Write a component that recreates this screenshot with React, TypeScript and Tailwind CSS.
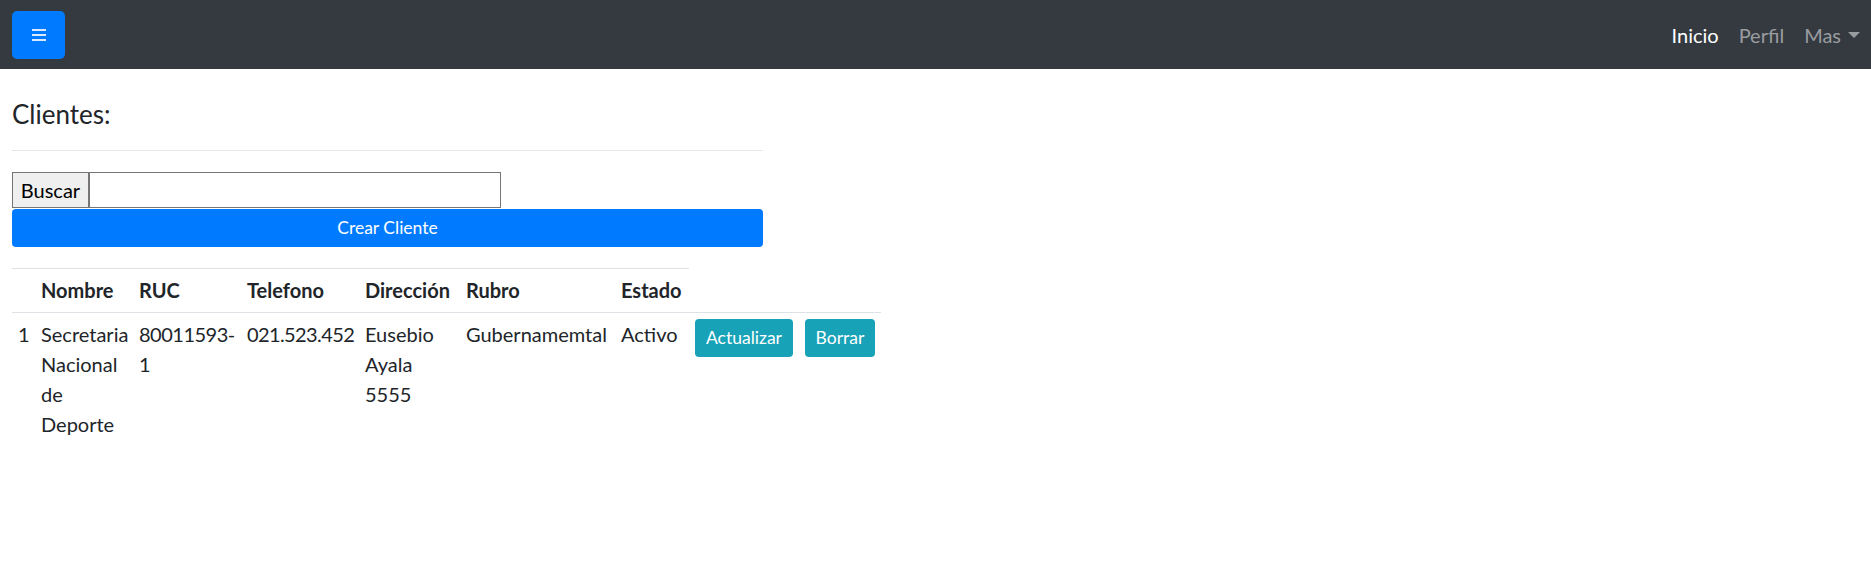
import React from "react";

export default function App() {
  const font = { fontFamily: "Lato, 'Noto Sans', 'Liberation Sans', sans-serif" };
  return (
    <div className="min-h-[585px] w-[1871px] bg-white text-[#212529]" style={font}>
      <nav className="flex h-[69px] items-center justify-between bg-[#343a40] pl-[12px] pr-[1px]">
        <button className="flex h-[48px] w-[53px] items-center justify-center rounded-[5px] bg-[#007bff]">
          <svg width="14" height="12" viewBox="0 0 14 12">
            <rect x="0" y="0" width="14" height="2" fill="#dbe9ff" />
            <rect x="0" y="5" width="14" height="2" fill="#dbe9ff" />
            <rect x="0" y="10" width="14" height="2" fill="#dbe9ff" />
          </svg>
        </button>
        <ul className="flex items-center text-[20px] leading-[30px]">
          <li className="px-[10px] text-white">Inicio</li>
          <li className="px-[10px] text-[#9a9da0]">Perfil</li>
          <li className="flex items-center px-[10px] text-[#9a9da0]">
            Mas
            <span className="ml-[7px] inline-block h-0 w-0 border-x-[6px] border-t-[6px] border-x-transparent border-t-[#9a9da0]" />
          </li>
        </ul>
      </nav>

      <main className="pl-[12px]">
        <h4 className="mt-[27px] text-[26px] leading-[36px] font-normal">Clientes:</h4>
        <hr className="mt-[18px] w-[751px] border-t border-[#e6e6e6]" />
        <div className="mt-[21px] flex h-[36px]">
          <button className="h-[36px] w-[77px] border border-[#767676] bg-[#efefef] text-[20px] text-black">
            Buscar
          </button>
          <input className="h-[36px] w-[412px] border border-[#767676] bg-white outline-none" type="text" />
        </div>
        <button className="mt-[1px] flex h-[38px] w-[751px] items-center justify-center rounded-[4px] bg-[#007bff] text-[17.5px] text-white">
          Crear Cliente
        </button>

        <table className="mt-[21px] table-fixed text-[20px] leading-[30px]" style={{ width: 869 }}>
          <colgroup>
            <col style={{ width: 23 }} />
            <col style={{ width: 98 }} />
            <col style={{ width: 108 }} />
            <col style={{ width: 118 }} />
            <col style={{ width: 101 }} />
            <col style={{ width: 155 }} />
            <col style={{ width: 74 }} />
            <col style={{ width: 110 }} />
            <col style={{ width: 82 }} />
          </colgroup>
          <thead>
            <tr>
              {["", "Nombre", "RUC", "Telefono", "Dirección", "Rubro", "Estado"].map((h, i) => (
                <th
                  key={i}
                  className="border-t border-b border-[#dee2e6] px-[6px] pt-[6px] pb-[7px] text-left align-bottom font-bold whitespace-nowrap"
                >
                  {h}
                </th>
              ))}
            </tr>
          </thead>
          <tbody>
            <tr>
              <td className="border-t border-[#dee2e6] px-[6px] py-[6px] align-top">1</td>
              <td className="border-t border-[#dee2e6] px-[6px] py-[6px] align-top">
                Secretaria Nacional de Deporte
              </td>
              <td className="border-t border-[#dee2e6] px-[6px] py-[6px] align-top whitespace-nowrap tracking-[-0.5px]">
                80011593-
                <br />1
              </td>
              <td className="border-t border-[#dee2e6] px-[6px] py-[6px] align-top whitespace-nowrap tracking-[-0.6px]">
                021.523.452
              </td>
              <td className="border-t border-[#dee2e6] px-[6px] py-[6px] align-top">Eusebio Ayala 5555</td>
              <td className="border-t border-[#dee2e6] px-[6px] py-[6px] align-top">Gubernamemtal</td>
              <td className="border-t border-[#dee2e6] px-[6px] py-[6px] align-top">Activo</td>
              <td className="border-t border-[#dee2e6] px-[6px] py-[6px] align-top">
                <button className="flex h-[38px] w-[98px] items-center justify-center rounded-[4px] bg-[#17a2b8] text-[17.5px] text-white">
                  Actualizar
                </button>
              </td>
              <td className="border-t border-[#dee2e6] px-[6px] py-[6px] align-top">
                <button className="flex h-[38px] w-[70px] items-center justify-center rounded-[4px] bg-[#17a2b8] text-[17.5px] text-white">
                  Borrar
                </button>
              </td>
            </tr>
          </tbody>
        </table>
      </main>
    </div>
  );
}
